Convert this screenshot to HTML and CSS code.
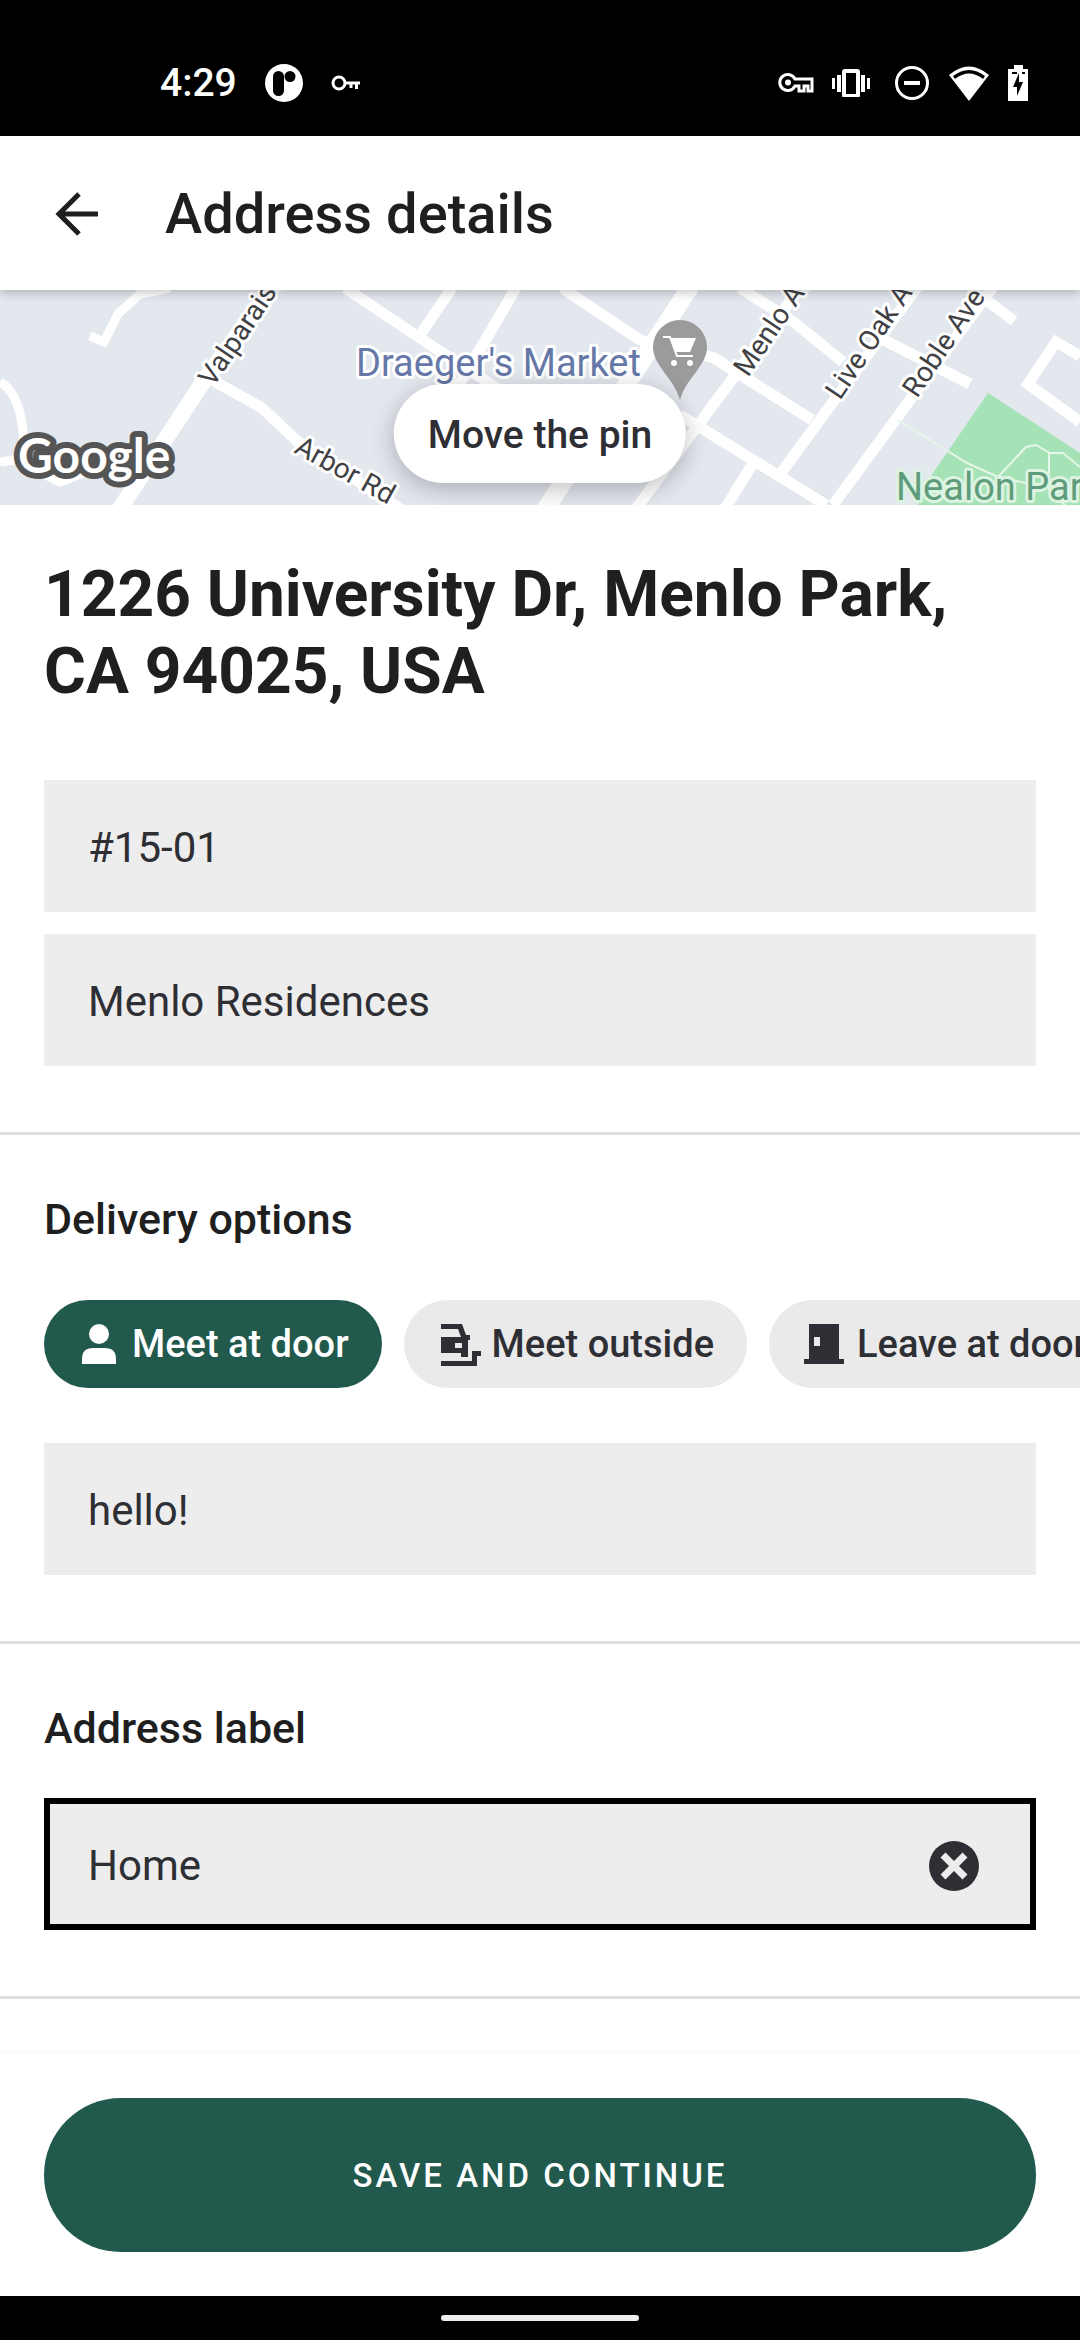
FILE: index.html
```html
<!DOCTYPE html>
<html lang="en">
<head>
    <meta charset="UTF-8">
    <meta name="viewport" content="width=device-width, initial-scale=1.0">
    <title>Address details</title>
    <link rel="stylesheet" href="styles.css">
</head>
<body>
    <div class="status-bar">
        <div class="status-left">
            <span class="clock">4:29</span>
            <svg width="38" height="38" viewBox="0 0 38 38">
                <circle cx="19" cy="19" r="19" fill="#fff"/>
                <rect x="8" y="7" width="11" height="25" rx="5.5"/>
                <circle cx="25" cy="12.5" r="5.5"/>
            </svg>
            <svg width="30" height="16" viewBox="0 0 30 16" fill="none" stroke="#fff" stroke-width="3">
                <circle cx="8" cy="8" r="6"/>
                <path d="M14 8H29M20 8v5M25.5 8v6"/>
            </svg>
        </div>
        <div class="status-right">
            <svg width="36" height="22" viewBox="0 0 36 22" fill="none" stroke="#fff" stroke-width="3">
                <path d="M17 7H34V19H30V14H26V19H21V14H17A8 8 0 1 1 17 7Z"/>
                <circle cx="10" cy="10.5" r="3" fill="#fff" stroke="none"/>
            </svg>
            <svg width="38" height="28" viewBox="0 0 38 28" fill="#fff">
                <path d="M0 9h3v11H0zM5 6h4v17H5zM29 6h4v17h-4zM35 9h3v11h-3z"/>
                <rect x="12" y="2" width="14" height="25" rx="1" fill="none" stroke="#fff" stroke-width="4"/>
            </svg>
            <svg width="42" height="36" viewBox="0 0 42 36" fill="none" stroke="#fff">
                <circle cx="24" cy="18" r="15.5" stroke-width="3"/>
                <path d="M16 18h16" stroke-width="4"/>
            </svg>
            <svg width="42" height="36" viewBox="0 0 42 36">
                <path d="M21 36L1 10Q21 -7 41 10Z" fill="#fff"/>
                <path d="M5 11Q21 -1 37 11L35 14Q21 3 7 14Z"/>
            </svg>
            <svg width="20" height="36" viewBox="0 0 20 36">
                <path d="M6 0h9v4h5v32H0V4h6z" fill="#fff"/>
                <path d="M11 8L5 22h4v9l6-14h-4zM4 7h5v2H4zM14 7h3v2h-3z"/>
            </svg>
        </div>
    </div>

    <header class="header">
        <button type="button" class="back" aria-label="Back">
            <svg width="44" height="44" viewBox="0 0 44 44" fill="none" stroke="#1f1f1f" stroke-width="5">
                <path d="M43 22H4M24 2L4 22L24 42"/>
            </svg>
        </button>
        <h1>Address details</h1>
    </header>

    <main>
        <div class="map">
            <svg class="map-canvas" viewBox="0 0 1080 215" preserveAspectRatio="xMidYMid slice">
                <rect width="1080" height="215" fill="#e3e7ee"/>
                <path class="park" d="M988 103L1080 163V215H918L933 183Z"/>
                <g class="roads">
                    <path d="M90 46L104 52L118 24L140 4L170 -2" stroke-width="9"/>
                    <path d="M0 92Q22 104 24 155M0 172L20 169M40 182L60 192L90 180" stroke-width="9"/>
                    <path d="M119 220L203 92L275 -6" stroke-width="16"/>
                    <path d="M212 90L262 118L298 152L405 222" stroke-width="11"/>
                    <path d="M345 -2L432 56L500 100L570 148M452 -2L420 45M516 -2L450 110"/>
                    <path d="M692 -6L545 220" stroke-width="18"/>
                    <path d="M562 -2L640 50L714 68L812 130M740 -2L795 33L843 72M884 50L970 94M980 5L1014 31"/>
                    <path d="M800 -2L635 220M918 -4L781 183M998 -10L833 215" stroke-width="11"/>
                    <path d="M680 125L826 215M752 175L724 220"/>
                    <path d="M1080 66L1056 52L1028 94L1080 132"/>
                </g>
                <path class="trail" d="M898 130L967 173L998 187L1026 157L1036 155L1050 163H1063L1080 177M998 187L1030 194M1049 163V200L1065 215"/>
                <g class="street">
                    <text transform="translate(213 98) rotate(-56)">Valparaiso</text>
                    <text transform="translate(293 162) rotate(29)">Arbor Rd</text>
                    <text transform="translate(748 88) rotate(-56)">Menlo Ave</text>
                    <text transform="translate(840 111) rotate(-56)">Live Oak Ave</text>
                    <text transform="translate(917 109) rotate(-56)">Roble Ave</text>
                </g>
                <text class="place" x="356" y="86">Draeger's Market</text>
                <text class="place place-park" x="896" y="210">Nealon Park</text>
                <path d="M680 30A27 27 0 0 1 707 57C707 76 686 88 680 110C674 88 653 76 653 57A27 27 0 0 1 680 30Z" fill="#9b9b9b"/>
                <path d="M663 47H670L677 66H693" fill="none" stroke="#fff" stroke-width="2"/>
                <path d="M671 48H696L690 62H676Z" fill="#fff"/>
                <circle cx="674" cy="73" r="3" fill="#fff"/>
                <circle cx="690" cy="73" r="3" fill="#fff"/>
                <text class="logo" x="18" y="183">Google</text>
            </svg>
            <button type="button" class="move-pin">Move the pin</button>
        </div>

        <section class="section">
            <h2 class="address">1226 University Dr, Menlo Park, CA 94025, USA</h2>
            <div class="fields">
                <input class="field" type="text" value="#15-01" aria-label="Unit number">
                <input class="field" type="text" value="Menlo Residences" aria-label="Building name">
            </div>
        </section>

        <section class="section">
            <h3>Delivery options</h3>
            <div class="chips">
                <label class="chip">
                    <input type="radio" name="delivery" checked>
                    <svg width="44" height="44" viewBox="0 0 44 44" fill="currentColor">
                        <circle cx="22" cy="12" r="10"/>
                        <path d="M5 42V37Q5 26 16 26H28Q39 26 39 37V42Z"/>
                    </svg>
                    Meet at door
                </label>
                <label class="chip">
                    <input type="radio" name="delivery">
                    <svg width="44" height="44" viewBox="0 0 44 44" fill="currentColor">
                        <path d="M4 2H25L29 13H33V18H31V35H24V31H4V15H24L21 7H4ZM18 21V26H25V21Z" fill-rule="evenodd"/>
                        <path d="M4 39H35V29H44V34H40V44H4Z"/>
                    </svg>
                    Meet outside
                </label>
                <label class="chip">
                    <input type="radio" name="delivery">
                    <svg width="44" height="44" viewBox="0 0 44 44" fill="currentColor">
                        <path d="M7 2H37V37H42V42H2V37H7ZM12 15V24H18V15Z" fill-rule="evenodd"/>
                    </svg>
                    Leave at door
                </label>
            </div>
            <input class="field" type="text" value="hello!" aria-label="Delivery note">
        </section>

        <section class="section">
            <h3><label for="address-label">Address label</label></h3>
            <div class="field-box">
                <input class="field field-active" id="address-label" type="text" value="Home">
                <button type="button" class="clear" aria-label="Clear">
                    <svg width="52" height="52" viewBox="0 0 52 52">
                        <circle cx="26" cy="26" r="25" fill="#2e2f34"/>
                        <path d="M15 15L37 37M37 15L15 37" stroke="#ededed" stroke-width="7"/>
                    </svg>
                </button>
            </div>
        </section>
    </main>

    <footer class="footer">
        <button type="button" class="save">SAVE AND CONTINUE</button>
    </footer>
    <div class="nav-bar"><div class="nav-handle"></div></div>
</body>
</html>
```
FILE: styles.css
```css
* {
    box-sizing: border-box;
}
body {
    margin: 0;
    min-height: 100vh;
    display: flex;
    flex-direction: column;
    font-family: Roboto, "Liberation Sans", sans-serif;
    background-color: #fff;
    color: #1f1f1f;
}
h1, h2, h3 {
    margin: 0;
}
svg {
    display: block;
    flex-shrink: 0;
}
button {
    font-family: inherit;
    border: none;
    padding: 0;
    cursor: pointer;
}

/* status bar */
.status-bar {
    display: flex;
    justify-content: space-between;
    height: 136px;
    padding: 30px 52px 0 160px;
    background-color: #000;
    color: #fff;
}
.status-left, .status-right {
    display: flex;
    align-items: center;
}
.status-left {
    gap: 28px;
}
.status-right {
    gap: 18px;
}
.clock {
    font-size: 39px;
    font-weight: 500;
}

/* header */
.header {
    position: relative;
    z-index: 1;
    display: flex;
    align-items: center;
    gap: 66px;
    height: 154px;
    padding: 2px 55px 0;
    background-color: #fff;
    box-shadow: 0 2px 10px rgba(0, 0, 0, 0.25);
}
.back {
    background: none;
}
h1 {
    font-size: 56px;
    line-height: 66px;
    font-weight: 500;
}

/* map */
.map {
    position: relative;
    height: 215px;
    overflow: hidden;
}
.map-canvas {
    width: 100%;
    height: 100%;
}
.park {
    fill: #a5e2b5;
}
.roads path {
    fill: none;
    stroke: #fff;
}
.roads path:not([stroke-width]) {
    stroke-width: 11px;
}
.trail {
    fill: none;
    stroke: #e6f6e9;
    stroke-width: 2px;
}
.map text {
    paint-order: stroke;
    stroke: #fff;
    stroke-width: 6px;
    stroke-linejoin: round;
}
.street {
    font-size: 28px;
    fill: #3f4144;
}
.place {
    font-size: 38px;
    fill: #6678a8;
}
.map .place-park {
    fill: #5f9c7c;
    stroke: #dcf3e1;
}
.map .logo {
    font-family: Lato, sans-serif;
    font-size: 48px;
    font-weight: 700;
    fill: #fff;
    stroke: #555;
    stroke-width: 12px;
}
.move-pin {
    position: absolute;
    left: 50%;
    bottom: 22px;
    transform: translateX(-50%);
    height: 99px;
    padding: 2px 34px 0;
    border-radius: 50px;
    background-color: #fff;
    color: #2e2f34;
    font-size: 39px;
    font-weight: 500;
    white-space: nowrap;
    box-shadow: 0 6px 24px rgba(0, 0, 0, 0.25);
}

/* form */
.section {
    padding: 51px 44px 66px;
    border-bottom: 3px solid #dedede;
}
.address {
    margin-bottom: 70px;
    font-size: 64px;
    line-height: 77px;
    font-weight: 700;
}
h3 {
    margin-bottom: 37px;
    font-size: 43px;
    line-height: 66px;
    font-weight: 500;
}
.fields {
    display: flex;
    flex-direction: column;
    gap: 22px;
}
.field {
    display: block;
    width: 100%;
    height: 132px;
    padding: 2px 44px 0;
    border: none;
    border-radius: 0;
    outline: none;
    background-color: #ededed;
    color: #2e2f34;
    font-family: inherit;
    font-size: 42px;
}
.field-box {
    position: relative;
}
.field-active {
    padding: 2px 132px 0 38px;
    border: 6px solid #000;
}
.clear {
    position: absolute;
    right: 56px;
    top: 42px;
    background: none;
}
.chips {
    display: flex;
    gap: 22px;
    margin: 48px -44px 55px 0;
    overflow: hidden;
}
.chip {
    display: flex;
    align-items: center;
    flex-shrink: 0;
    gap: 11px;
    height: 88px;
    padding: 0 33px;
    border-radius: 44px;
    background-color: #eaeaea;
    color: #2e2f34;
    font-size: 38px;
    font-weight: 500;
    white-space: nowrap;
    cursor: pointer;
}
.chip input {
    position: absolute;
    opacity: 0;
}
.chip:has(input:checked) {
    background-color: #21594d;
    color: #fff;
}

/* footer */
.footer {
    margin-top: auto;
    padding: 44px;
    border-top: 3px solid #fafafa;
}
.save {
    width: 100%;
    height: 154px;
    border-radius: 77px;
    background-color: #21594d;
    color: #fff;
    font-size: 33px;
    font-weight: 500;
    letter-spacing: 3px;
}
.nav-bar {
    display: flex;
    justify-content: center;
    align-items: center;
    height: 44px;
    background-color: #000;
}
.nav-handle {
    width: 198px;
    height: 6px;
    border-radius: 3px;
    background-color: #ededed;
}
```
